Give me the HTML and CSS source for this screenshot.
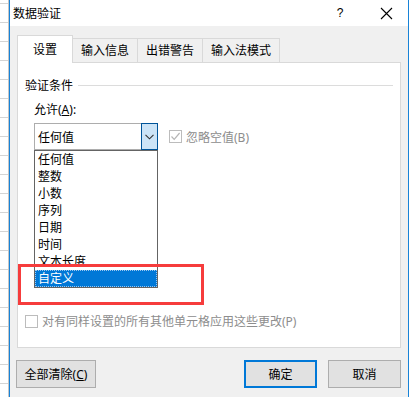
FILE: index.html
```html
<!DOCTYPE html>
<html lang="zh-CN">
<head>
  <meta charset="UTF-8">
  <title>数据验证</title>
  <link rel="stylesheet" href="styles.css">
</head>
<body>
<div class="sheet"></div>
<div class="dialog">
  <div class="titlebar">
    <span class="title">数据验证</span>
    <span class="help">?</span>
    <svg class="close" width="13" height="13" viewBox="0 0 13 13"><path d="M1 1L12 12M12 1L1 12" stroke="#000" stroke-width="1.1" fill="none"/></svg>
  </div>

  <div class="body">
    <div class="tabs">
      <div class="tab active">设置</div>
      <div class="tab">输入信息</div>
      <div class="tab">出错警告</div>
      <div class="tab">输入法模式</div>
    </div>

    <div class="panel">
      <div class="group-title"><span>验证条件</span><i></i></div>
      <div class="label">允许(<u>A</u>):</div>
      <div class="row">
        <div class="select">
          <span class="value">任何值</span>
          <span class="drop">
            <svg width="9" height="6" viewBox="0 0 9 6"><path d="M0.5 0.8L4.5 4.8L8.5 0.8" stroke="#333" stroke-width="1.1" fill="none"/></svg>
          </span>
          <ul class="list">
            <li>任何值</li>
            <li>整数</li>
            <li>小数</li>
            <li>序列</li>
            <li>日期</li>
            <li>时间</li>
            <li>文本长度</li>
            <li class="selected">自定义</li>
          </ul>
        </div>
        <label class="check disabled">
          <span class="box"><svg width="11" height="11" viewBox="0 0 11 11"><path d="M1.5 5.5L4.2 8.3L9.6 2" stroke="#b5b5b5" stroke-width="1.2" fill="none"/></svg></span>
          忽略空值(B)
        </label>
      </div>
      <label class="check disabled bottom">
        <span class="box"></span>
        对有同样设置的所有其他单元格应用这些更改(P)
      </label>
    </div>

    <div class="buttons">
      <button class="btn">全部清除(<u>C</u>)</button>
      <div class="right">
        <button class="btn default">确定</button>
        <button class="btn">取消</button>
      </div>
    </div>
  </div>
</div>
<div class="mark"></div>
</body>
</html>
```

FILE: styles.css
```css
* { box-sizing: border-box; }
body { margin: 0; width: 409px; height: 397px; overflow: hidden; display: flex; position: relative;
  font-family: "Noto Sans", "Noto Sans CJK SC", sans-serif; font-size: 12px; color: #000; background: #fff; }
.sheet { width: 9px; height: 397px; border-right: 1px solid #c6c6c6;
  background: repeating-linear-gradient(to bottom, #fff 0, #fff 3px, #d4d4d4 3px, #d4d4d4 4px, #fff 4px, #fff 19px); }
.dialog { width: 400px; height: 397px; border-left: 1px solid #1883d7; border-right: 1px solid #1883d7; background: #f0f0f0; display: flex; flex-direction: column; }
.titlebar { height: 26px; background: #fff; display: flex; align-items: center; padding-left: 3px; }
.title { flex: 1; font-size: 12px; }
.help { width: 20px; text-align: center; font-size: 12px; margin-right: 30px; font-family: "Liberation Sans", sans-serif; }
.close { margin-right: 15px; }
.body { padding: 9px 7px 0 7px; display: flex; flex-direction: column; }
.tabs { display: flex; align-items: flex-end; height: 27px; }
.tab { height: 24px; line-height: 23px; padding: 0 8px; border: 1px solid #d9d9d9; border-bottom: none; border-left: none; background: #f0f0f0; }
.tab.active { height: 28px; line-height: 27px; padding: 0 15px; background: #fff; border-left: 1px solid #d9d9d9; margin-bottom: -1px; position: relative; z-index: 1; }
.panel { height: 286px; background: #fff; border: 1px solid #d9d9d9; padding: 14px 7px 0 7px; position: relative; }
.group-title { display: flex; align-items: center; height: 16px; }
.group-title i { flex: 1; height: 1px; background: #dcdcdc; margin-left: 5px; }
.label { margin: 9px 0 0 9px; height: 16px; line-height: 16px; }
.label u, .btn u { text-decoration: underline; }
.row { display: flex; align-items: center; margin: 5px 0 0 9px; }
.select { position: relative; width: 124px; height: 27px; border: 1px solid #adadad; display: flex; align-items: center; }
.value { flex: 1; padding-left: 3px; }
.drop { width: 17px; height: 27px; margin: -1px -1px -1px 0; background: #cce4f7; border: 1px solid #005499; display: flex; align-items: center; justify-content: center; }
.list { position: absolute; left: -1px; top: 26px; width: 124px; margin: 0; padding: 0; list-style: none; background: #fff; border: 1px solid #646464; z-index: 2; }
.list li { height: 17px; line-height: 17px; padding-left: 3px; }
.list li.selected { background: #0078d7; color: #fff; outline: 1px dotted #9cc7ef; outline-offset: -1px; }
.check { display: flex; align-items: center; }
.check.disabled { color: #8d8d8d; }
.check .box { width: 13px; height: 13px; border: 1px solid #bcbcbc; background: #fff; margin-right: 4px; display: flex; align-items: center; justify-content: center; }
.row .check { margin-left: 11px; }
.bottom { position: absolute; left: 7px; top: 249px; }
.buttons { display: flex; justify-content: space-between; margin-top: 12px; margin-left: -1px; }
.right { display: flex; gap: 11px; }
.btn { height: 28px; font: inherit; color: #000; background: #e1e1e1; border: 1px solid #adadad; padding: 0; width: 80px; }
.right .btn { width: 73px; }
.btn.default { border: 2px solid #0078d7; }
.mark { position: absolute; left: 18px; top: 264px; width: 186px; height: 41px; border: 3px solid #f63c3c; z-index: 5; }
```
